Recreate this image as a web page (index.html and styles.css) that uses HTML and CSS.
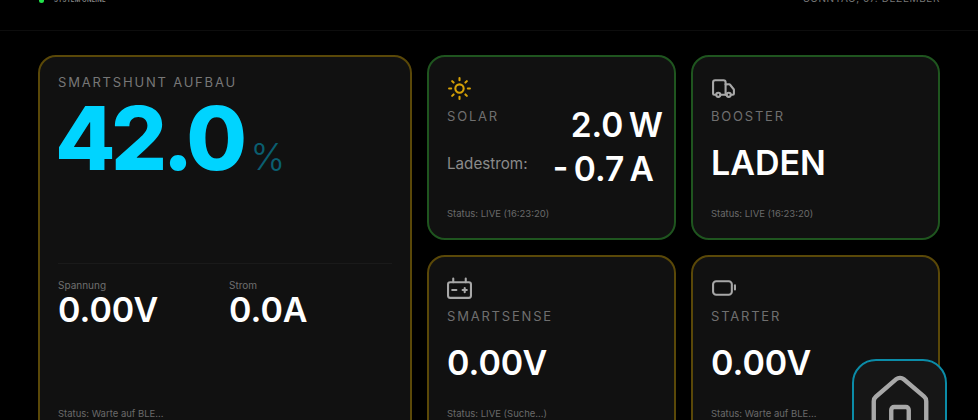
FILE: index.html
```html
<!DOCTYPE html>
<html lang="de">
<head>
<meta charset="utf-8">
<title>Dashboard</title>
<link rel="stylesheet" href="styles.css">
</head>
<body>
<header class="topbar">
  <div class="topbar-left"><span class="dot"></span><span class="sys">SYSTEM ONLINE</span></div>
  <div class="date">SONNTAG, 07. DEZEMBER</div>
</header>
<main class="grid">
  <section class="card card-main amber">
    <div class="label label-main">SMARTSHUNT AUFBAU</div>
    <div class="soc"><span class="soc-value">42.0</span><span class="soc-unit">%</span></div>
    <div class="divider"></div>
    <div class="pair">
      <div class="pair-item"><div class="small-label">Spannung</div><div class="value">0.00V</div></div>
      <div class="pair-item"><div class="small-label">Strom</div><div class="value">0.0A</div></div>
    </div>
    <div class="status">Status: Warte auf BLE...</div>
  </section>

  <section class="card green">
    <svg class="icon sun" viewBox="0 0 24 24" fill="none" stroke="currentColor" stroke-width="2" stroke-linecap="round"><circle cx="12" cy="12" r="4"/><path d="M12 2v2M12 20v2M4.93 4.93l1.41 1.41M17.66 17.66l1.41 1.41M2 12h2M20 12h2M6.34 17.66l-1.41 1.41M19.07 4.93l-1.41 1.41"/></svg>
    <div class="label">SOLAR</div>
    <div class="solar-power">2.0 W</div>
    <div class="solar-row"><span class="solar-label">Ladestrom:</span><span class="solar-current">- 0.7 A</span></div>
    <div class="status">Status: LIVE (16:23:20)</div>
  </section>

  <section class="card green">
    <svg class="icon" viewBox="0 0 24 24" fill="none" stroke="currentColor" stroke-width="2" stroke-linecap="round" stroke-linejoin="round"><path d="M14 18V6a2 2 0 0 0-2-2H4a2 2 0 0 0-2 2v11a1 1 0 0 0 1 1h2"/><path d="M15 18H9"/><path d="M19 18h2a1 1 0 0 0 1-1v-3.65a1 1 0 0 0-.22-.62l-3.48-4.35A1 1 0 0 0 17.52 8H14"/><circle cx="17" cy="18" r="2"/><circle cx="7" cy="18" r="2"/></svg>
    <div class="label">BOOSTER</div>
    <div class="value value-mid">LADEN</div>
    <div class="status">Status: LIVE (16:23:20)</div>
  </section>

  <section class="card amber">
    <svg class="icon" viewBox="0 0 24 24" fill="none" stroke="currentColor" stroke-width="2" stroke-linecap="round" stroke-linejoin="round"><path d="M6 6V2.5M18 6V2.5"/><rect x="1" y="6" width="22" height="15" rx="2"/><path d="M5 13.5h4M15 13.5h4M17 11.5v4"/></svg>
    <div class="label">SMARTSENSE</div>
    <div class="value value-mid">0.00V</div>
    <div class="status">Status: LIVE (Suche...)</div>
  </section>

  <section class="card amber">
    <svg class="icon" viewBox="0 0 24 24" fill="none" stroke="currentColor" stroke-width="2" stroke-linecap="round" stroke-linejoin="round"><rect x="2" y="5" width="18" height="13" rx="3"/><path d="M23 9v4"/></svg>
    <div class="label">STARTER</div>
    <div class="value value-mid">0.00V</div>
    <div class="status">Status: Warte auf BLE...</div>
  </section>
</main>
<button class="home" aria-label="Home">
  <svg viewBox="0 0 24 24" fill="none" stroke="currentColor" stroke-width="1.5" stroke-linecap="round" stroke-linejoin="round"><path d="M15 21v-8a1 1 0 0 0-1-1h-4a1 1 0 0 0-1 1v8"/><path d="M3 10a2 2 0 0 1 .709-1.528l7-6a2 2 0 0 1 2.582 0l7 6A2 2 0 0 1 21 10v9a2 2 0 0 1-2 2H5a2 2 0 0 1-2-2z"/></svg>
</button>
</body>
</html>
```
FILE: styles.css
```css
* { box-sizing: border-box; }
html, body { margin: 0; height: 420px; overflow: hidden; background: #000; }
body { position: relative; font-family: Inter, "Liberation Sans", sans-serif; color: #fff; }

.topbar {
  height: 31px;
  display: flex;
  justify-content: space-between;
  padding: 0 38px;
  border-bottom: 1px solid #0d0d0d;
}
.topbar-left { display: flex; align-items: flex-start; margin-top: -4px; }
.dot { width: 5px; height: 5px; margin: 2px 0 0 1px; border-radius: 50%; background: #22e34a; }
.sys { margin-left: 10px; font-size: 6px; line-height: 8px; letter-spacing: .2px; color: #8a8a8a; font-weight: 600; }
.date { margin-top: -10px; font-size: 10px; line-height: 16px; letter-spacing: .6px; color: #777; }

.grid {
  display: grid;
  grid-template-columns: 374px 249px 249px;
  grid-template-rows: 185px 185px;
  gap: 15px;
  padding: 24px 38px 0;
}
.card {
  position: relative;
  display: flex;
  flex-direction: column;
  padding: 19px 18px 18px;
  background: #111;
  border: 2px solid #333;
  border-radius: 18px;
}
.amber { border-color: #5a4808; }
.green { border-color: #1f551f; }
.card-main { grid-row: span 2; }

.label { margin-top: 7px; font-size: 13px; line-height: 16px; letter-spacing: 1.8px; color: #6f6f6f; }
.label-main { margin-top: 0; line-height: 12px; color: #777; }

.soc { display: flex; align-items: baseline; margin-top: 0; height: 100px; }
.soc-value { margin-left: -3px; font-size: 88px; line-height: 100px; font-weight: 850; letter-spacing: -4.6px; color: #00d4ff; }
.soc-unit { margin-left: 8px; font-size: 37px; font-weight: 300; color: #00d4ff; opacity: .4; }

.divider { margin-top: 75px; height: 1px; background: #1a1a1a; }
.pair { display: flex; margin-top: 15px; }
.pair-item { flex: none; width: 171px; }
.small-label { font-size: 10px; line-height: 12px; color: #6f6f6f; }
.value { font-size: 34px; line-height: 38px; font-weight: 600; color: #fff; }

.icon { display: block; width: 25px; height: 25px; color: #a8a8a8; margin: 0; flex: none; }
.sun { color: #d6a106; }

.value-mid { margin-top: 20px; }

.solar-power { position: absolute; right: 11px; top: 49px; font-size: 33.5px; line-height: 38px; font-weight: 600; word-spacing: -3px; }
.solar-row { position: absolute; left: 18px; right: 20px; top: 93px; display: flex; align-items: flex-start; justify-content: space-between; }
.solar-label { margin-top: 4px; font-size: 15.2px; line-height: 20px; color: #8a8a8a; }
.solar-current { font-size: 33.5px; line-height: 38px; font-weight: 600; word-spacing: -3px; }

.status { position: absolute; left: 18px; bottom: 18px; font-size: 9.5px; line-height: 12px; color: #6a6a6a; }

.home {
  position: absolute;
  left: 852px;
  top: 359px;
  width: 95px;
  height: 95px;
  display: flex;
  align-items: center;
  justify-content: center;
  padding: 0;
  background: #161616;
  border: 2px solid #0b8ca8;
  border-radius: 24px;
  color: #a8a8a8;
}
.home svg { width: 70px; height: 70px; }
```
